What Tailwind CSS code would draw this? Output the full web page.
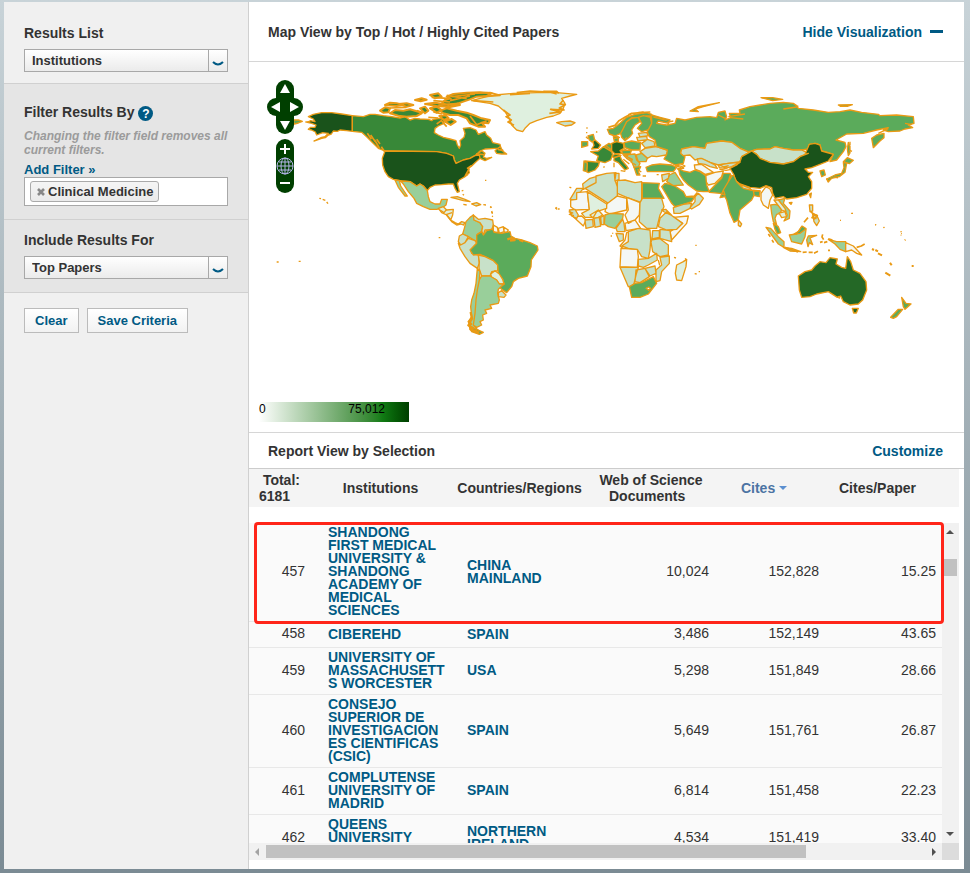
<!DOCTYPE html>
<html lang="en">
<head>
    <meta charset="utf-8">
    <meta name="viewport" content="width=device-width, initial-scale=1">
    <title>Map View by Top / Hot / Highly Cited Papers</title>
    <script src="https://cdn.jsdelivr.net/npm/@tailwindcss/browser@4"></script>
</head>
<body class="min-h-screen bg-linear-to-b from-[#c8d3d8] to-[#7b8b94] font-['Liberation_Sans',Arial,sans-serif] text-sm text-[#333]">

    <div class="flex pt-[2px] pr-[6px] pb-1 pl-1">

        <!-- Filters -->
        <aside class="w-[245px] shrink-0 border-r border-[#d0d0d0] bg-[#f0f0f0] font-bold">
            <div class="border-b border-[#d0d0d0] px-5 pt-[21px] pb-[11px]">
                <label for="results_list" class="block leading-5">Results List</label>
                <div class="relative mt-[6px] h-[23px] border border-[#a8a8a8] bg-linear-to-b from-white to-[#ebebeb]">
                    <select id="results_list" class="block h-full w-full appearance-none pt-[2px] pl-[7px] text-[13px] font-bold">
                        <option>Institutions</option>
                    </select>
                    <svg class="pointer-events-none absolute top-0 right-0 h-full w-[19px] border-l border-[#a8a8a8]" viewBox="0 0 18 21" fill="none" stroke="#005a84" stroke-width="2"><path d="M4 12q5 5 10 0"/></svg>
                </div>
            </div>

            <div class="border-b border-[#d0d0d0] bg-[#e5e5e5] px-5 pt-[18px] pb-[13px]">
                <div class="flex items-center gap-1 leading-5">
                    Filter Results By
                    <button type="button" aria-label="Help" class="mt-[3px] size-[15px] rounded-full bg-[#005a84] text-xs leading-none font-bold text-white">?</button>
                </div>
                <p class="mt-[7px] -mr-1 text-xs leading-[14px] text-[#9b9b9b] italic">Changing the filter field removes all current filters.</p>
                <a href="#" class="block pt-[5px] text-[13px] leading-[15px] text-[#005a84]">Add Filter »</a>
                <div class="flex h-[29px] items-center border border-[#a8a8a8] bg-white pl-[5px]">
                    <span class="flex h-[21px] items-center gap-[3px] rounded-[3px] border border-[#aaa] bg-linear-to-b from-[#f5f5f5] to-[#eaeaea] px-[5px] pt-px text-[13px]">
                        <button type="button" aria-label="Remove Clinical Medicine" class="ml-px">
                            <svg class="size-2" viewBox="0 0 8 8" stroke="#888" stroke-width="2.6"><path d="M1 1l6 6M7 1L1 7"/></svg>
                        </button>
                        Clinical Medicine
                    </span>
                </div>
            </div>

            <div class="border-b border-[#d0d0d0] bg-[#e5e5e5] px-5 pt-[10px] pb-[13px]">
                <label for="include_results" class="block leading-5">Include Results For</label>
                <div class="relative mt-[6px] h-[23px] border border-[#a8a8a8] bg-linear-to-b from-white to-[#ebebeb]">
                    <select id="include_results" class="block h-full w-full appearance-none pt-[2px] pl-[7px] text-[13px] font-bold">
                        <option>Top Papers</option>
                    </select>
                    <svg class="pointer-events-none absolute top-0 right-0 h-full w-[19px] border-l border-[#a8a8a8]" viewBox="0 0 18 21" fill="none" stroke="#005a84" stroke-width="2"><path d="M4 12q5 5 10 0"/></svg>
                </div>
            </div>

            <div class="flex gap-2 px-5 pt-[15px]">
                <button type="button" class="h-[25px] border border-[#bbb] bg-linear-to-b from-white to-[#f2f2f2] px-[10px] pt-[2px] text-[13px] font-bold text-[#005a84]">Clear</button>
                <button type="button" class="h-[25px] border border-[#bbb] bg-linear-to-b from-white to-[#f2f2f2] px-[10px] pt-[2px] text-[13px] font-bold text-[#005a84]">Save Criteria</button>
            </div>
        </aside>

        <main class="min-w-0 flex-1 bg-white pb-[9px]">
            <div class="flex h-[60px] items-center justify-between border-b border-[#d6d6d6] pr-[21px] pl-[19px] font-bold">
                <h2>Map View by Top / Hot / Highly Cited Papers</h2>
                <button type="button" class="flex items-center gap-2 font-bold text-[#005a84]">Hide Visualization <span class="h-[3px] w-[13px] bg-[#005a84]"></span></button>
            </div>

            <section class="relative border-b border-[#d6d6d6] pb-[10px]">
                <svg class="block w-full" viewBox="0 0 715 340" stroke="#ea9a14" stroke-linejoin="round" stroke-width="4" role="img" aria-label="World map">
                    <!-- Alaska and Hawaii -->
                    <g transform="translate(1 8) scale(.33333)">
                        <path fill="#1a531b" d="M175 140L190 133 215 128 245 128 275 132 307 137V184L290 182 270 180 262 184 250 183 244 192 235 195 226 203 215 205 192 213 215 202 225 200 235 190 218 188 200 195 196 186 185 180 175 178 182 172 195 172 198 165 185 160 172 157 182 152 195 155 190 147Z"/>
                        <path fill="#5bab5b" d="M130 150l15 0 12 4-12 5-12 3z"/>
                        <path fill="none" d="M166 156h12M208 385l5 1M218 388l8 3M230 396l4 5M80 576h6M146 574h6"/>
                    </g>
                    <!-- North America -->
                    <g transform="translate(121 18) scale(.33333)">
                        <path fill="#388838" d="M-53 107L-20 110 0 103 15 103 40 107 65 110 90 114 105 110 120 120 135 115 150 117 175 118 185 122 190 118 210 115 222 120 222 130 205 138 195 145 193 158 205 165 220 172 240 177 258 182 262 195 268 205 272 195 270 182 282 172 285 160 280 145 300 143 318 150 325 163 345 155 350 165 362 175 368 188 390 193 393 205 378 205 345 207 330 213 318 225 300 235 280 240 258 250 253 240 250 228 230 220 200 215 45 213 25 205 5 185 -10 170 -25 157 -53 154Z"/>
                        <path fill="#388838" d="M318 225L335 212 345 220 340 232 350 235 365 232 345 242 330 235ZM375 212L390 200 400 215 410 222 395 222 380 220Z"/>
                        <path fill="#388838" stroke-width="6" d="M60 100L75 90 100 92 120 88 145 95 155 100 140 108 110 110 85 107ZM30 92L45 82 60 85 55 97 40 98ZM210 92L230 85 260 92 290 98 310 105 335 115 360 120 355 130 335 128 345 140 325 140 300 130 290 115 265 105 240 105 220 100ZM45 75L60 68 80 70 100 75 80 78ZM85 72l25-2 20 5-20 5zM150 85l15-5 10 12-10 8zM180 85l20-5 15 10-15 8zM135 60l20-5 15 4-18 5zM180 45L205 40 215 50 195 55ZM215 70L225 60 240 55 230 50 250 42 290 38 330 37 365 40 350 48 320 50 300 58 280 65 260 72 235 75ZM165 72l30-4 30 5 45 2-30 6-40-3zM225 125l20-8 12 8-15 10zM208 108l18-2 10 8-14 6z"/>
                        <path fill="none" stroke-width="5" d="M-8 160l12 18M2 165l14 20M14 180l14 24M20 178l10 14M34 200l12 18M240 62l60-14M190 62l50 4M230 46l60 10M300 108l20 26 30-12M200 132l14-10 16 18M185 52l60 4M205 76l60-6M245 50l70-8M60 84l50-2M140 92l20 6M190 96l26 6M175 112l30 2M318 222l26 2M384 208l16 4"/>
                        <path fill="#1a531b" d="M45 213L200 215 230 220 250 228 253 240 258 250 280 240 300 235 315 227 328 225 330 235 315 248 305 258 295 265 298 278 285 290 268 300 262 310 268 335 262 337 255 325 250 312 235 312 215 314 195 315 180 322 172 332 160 318 150 312 140 318 120 305 95 303 70 298 55 290 45 275 38 255 37 235Z"/>
                        <path fill="#99cf9a" d="M92 303L120 305 140 318 150 312 160 318 172 332 175 350 180 365 195 372 210 372 215 358 232 358 228 375 215 385 200 388 180 388 160 380 140 370 132 355 115 335 100 312ZM75 300L88 302 92 318 112 348 105 348 85 322Z"/>
                        <path fill="#dff0df" d="M305 62L350 50 375 45 430 40 500 38 560 38 620 43 600 48 575 55 585 70 580 85 570 100 550 108 530 112 500 122 480 130 465 145 458 155 440 150 425 135 418 115 405 95 385 78 360 70Z"/>
                        <path fill="none" stroke-width="5" d="M400 90l20 15-12 5 16 10-10 6 18 10M580 60l-10 12 16 2-18 10 14 6-40-2 30 8-34 4M310 62l60 4M300 40l60-2 30 8-50 4M440 38l40-5 60 3 20 6M420 44l60-4M520 34l40 0 6 6M298 265l-12 22 8-4M305 256l-14 10"/>
                        <path fill="#c8e1c9" d="M560 128L575 125 600 123 615 128 605 135 585 138ZM243 352L262 350 285 358 300 365 280 362 258 356ZM305 372L320 368 332 374 318 378Z"/>
                        <path fill="none" d="M280 373l10 2M340 374l8 1M275 333l5-2M278 343l4 3M362 380l2 4M365 393l2 8M345 301h4M557 382l4 3M564 387h5M600 323h4M649 144h4"/>
                    </g>
                    <!-- South America -->
                    <g transform="translate(181 138) scale(.33333)" fill="#c8e1c9">
                        <path fill="#dff0df" d="M25 25L40 20 50 30 70 28 68 45 62 60 50 45 35 38Z"/>
                        <path d="M50 45L62 60 75 68 85 72 95 65 105 68 100 75 92 72 80 75 65 65Z"/>
                        <path fill="none" d="M30 30l12 8 8-10M48 44l18-6"/>
                        <path fill="#99cf9a" d="M108 65L120 52 130 45 132 60 150 68 158 80 155 95 142 103 140 125 132 120 115 110 98 102 103 85Z"/>
                        <path d="M130 45L145 58 165 55 188 60 190 75 185 90 165 90 160 105 155 95 158 80 150 68 132 60Z"/>
                        <path fill="#f4f7f4" d="M190 75L202 82 205 98 190 95ZM205 85L220 80 222 95 208 100ZM222 82L235 90 230 98 222 95Z"/>
                        <path d="M88 108L98 102 115 110 105 128 92 135 85 125ZM85 130L92 135 105 128 115 115 135 122 140 130 122 150 125 160 145 165 148 190 142 205 120 190 105 170 90 145Z"/>
                        <path fill="#5bab5b" d="M140 105L155 95 160 105 170 92 188 87 192 97 215 100 240 95 243 108 255 115 275 120 300 128 322 138 324 150 312 168 304 180 303 200 292 228 265 235 250 245 245 260 230 278 215 268 208 262 222 252 218 238 205 222 202 195 190 182 165 170 150 163 130 165 120 150 140 130Z"/>
                        <path d="M145 165L165 170 190 182 203 195 203 212 185 215 180 228 155 228 147 205 148 185Z"/>
                        <path fill="#dff0df" d="M182 222L195 212 208 222 218 238 222 252 208 252 200 240 185 232Z"/>
                        <path fill="#99cf9a" d="M155 228L180 228 200 240 208 252 222 252 205 268 203 280 208 300 205 310 180 315 185 325 165 330 170 340 158 345 160 360 150 365 155 375 140 382 130 375 135 340 138 300 142 270 148 240ZM142 205L150 215 148 240 142 270 138 300 135 340 130 375 145 392 120 385 115 365 125 350 122 320 125 300 132 280 138 250Z"/>
                        <path d="M205 278L215 272 228 285 222 292 205 290Z"/>
                        <path fill="#5bab5b" d="M118 380L140 388 160 397 148 403 125 395Z"/>
                        <path fill="none" stroke-width="7" d="M232 118l12-4 10 6-14 2M115 362l8 10-8 4 14 8-8 4 20 6M268 120l12 4M122 336l4 20-6 10M128 392l20 6"/>
                        <path fill="none" d="M26 113h5M180 20l4 2M185 36l3 4M186 48l3 2M376 24l6 4"/>
                    </g>
                    <!-- Europe -->
                    <g transform="translate(311 18) scale(.33333)" fill="#5bab5b">
                        <path d="M142 148L160 145 180 130 200 112 225 103 260 98 275 103 272 112 250 107 235 112 215 115 200 125 190 145 182 160 165 168 148 162ZM190 145L200 125 215 113 235 112 240 125 225 135 215 150 218 160 208 172 195 182 185 172 182 160ZM235 112L250 107 270 108 275 130 270 148 245 155 232 145 245 130Z"/>
                        <path fill="none" stroke-width="5" d="M145 142l20-6 12-14 20-12 20-10 24-2 30-2M205 104l10-4M235 98l16-2"/>
                        <path fill="#c8e1c9" d="M235 160l25-3 5 10-25 4zM230 172l30-3 2 10-28 4zM245 190L262 178 282 185 285 198 255 203ZM240 215L255 205 290 200 325 212 318 225 290 230 275 228 262 235 248 222Z"/>
                        <path d="M192 188L215 183 242 188 240 210 215 210 195 203ZM185 212L215 210 210 222 188 222ZM132 200l15-10 12 5-5 15-10 0zM65 185l18 0 0 12-18 5zM160 170l15 0 0 14-12 0z"/>
                        <path fill="#226522" d="M155 190L170 185 190 190 192 205 180 212 185 220 165 222 155 212Z"/>
                        <path fill="#388838" d="M92 215L115 213 130 200 155 215 158 225 152 240 135 248 110 242 115 228ZM75 243L118 247 115 258 105 270 85 278 80 275 82 250ZM162 232L180 228 185 240 200 258 205 265 195 270 175 248 162 242ZM155 228l12-6 16 4-20 8z"/>
                        <path d="M72 243L82 250 80 275 70 272Z"/>
                        <path fill="#226522" d="M98 184L105 180 122 195 115 205 95 207 102 196Z"/>
                        <path d="M84 168L100 163 104 180 96 186 88 180Z"/>
                        <path fill="#99cf9a" d="M190 225L225 222 230 240 240 250 235 262 222 262 215 245 200 235ZM228 225L245 220 262 235 258 245 235 245Z"/>
                        <path d="M222 262L242 260 235 275 240 285 230 285ZM258 262L275 255 300 252 335 255 350 262 340 275 300 275 262 275Z"/>
                        <path fill="none" d="M205 232l12 6-4 10M190 238l18 14M220 250l8 6M162 248v14M182 272l14 2M248 288h10M290 284h6M78 158h4M108 155l4 2M84 176l-6-6M130 262l4-2M340 245l20 5 15 8-10 6-15-6M345 262l12-4M195 178l5-6M196 226l20 14M204 222l-4 14M136 196l16 12M190 206l12 6M232 268l12 8M162 176l18-4"/>
                    </g>
                    <!-- Africa -->
                    <g transform="translate(311 98) scale(.33333)" fill="#c8e1c9">
                        <path d="M68 72L90 55 108 50 108 68 90 78 70 88ZM30 118L50 85 70 85 58 100 48 120ZM75 85L108 68 108 48 140 40 168 38 165 60 172 80 172 108 145 130 80 88ZM163 40l14 0 0 18-12 5zM172 62L195 60 225 68 245 65 245 128 200 112 172 100Z"/>
                        <path fill="#5bab5b" d="M247 68L298 70 295 85 312 115 247 115Z"/>
                        <path fill="#f4f7f4" d="M32 120L50 118 50 98 82 95 88 148 45 150 32 140ZM140 132L172 108 200 115 200 150 150 162 135 155ZM200 112L240 128 238 165 225 180 205 190 195 165 205 150ZM40 170L65 168 78 180 70 198ZM195 190L225 180 242 205 220 208 198 212ZM180 258L195 240 200 218 212 215 205 250 185 262ZM340 172L385 168 380 190 335 240 330 215 368 190ZM183 265L232 268 235 290 232 322 180 320Z"/>
                        <path fill="#dff0df" d="M82 95L140 132 140 145 110 155 100 172 75 172 65 160 88 148ZM90 165L115 150 128 165 115 172 100 175ZM350 315L370 305 380 298 378 320 365 362 350 360 346 340Z"/>
                        <path d="M247 115L305 115 312 140 300 165 290 205 260 205 238 185 240 128ZM28 150L45 148 55 165 50 175 35 168ZM75 180L98 178 100 200 78 205ZM102 175L118 172 122 198 105 202ZM122 172l10-6 0 28-8 0zM168 205L188 178 192 190 195 215 172 215ZM168 220L190 222 190 240 178 245Z"/>
                        <path fill="#99cf9a" d="M135 165L150 160 190 162 188 175 165 205 145 200 133 192Z"/>
                        <path d="M205 215L235 205 270 210 272 240 270 270 265 295 245 290 232 268 205 265 185 258 205 245ZM305 150l12-2 18 18-22-10zM300 175L320 155 340 170 368 190 350 208 320 210 295 200ZM300 208L330 212 335 245 300 235ZM278 212l20 0 0 20-22 5zM272 240L300 236 325 255 325 285 300 290 278 275ZM235 298L265 295 290 280 292 300 265 315 250 322 235 318ZM300 292L328 288 328 310 305 335 300 362 288 365 288 330 305 315ZM255 325L285 318 288 340 270 348ZM180 322L235 322 228 345 220 380 205 380ZM228 330L255 325 268 350 240 368 225 365Z"/>
                        <path fill="#5bab5b" d="M208 380L225 370 245 368 280 350 290 370 265 402 240 412 215 412Z"/>
                        <path fill="#fff" d="M258 385l8-4 6 4-6 6z"/>
                        <path fill="none" d="M26 155l12 4-10 4 14 4M295 300l4 16M272 232l2 14M28 82h4M342 292l6 2M376 295l2 6M152 228h4M158 218v3M406 256h4M404 341l6 1M416 335h4"/>
                    </g>
                    <!-- Asia -->
                    <g transform="translate(411 23) scale(.33333)" fill="#5bab5b">
                        <path d="M-25 90L0 97 30 105 25 115 -5 108 -10 115 20 120 45 115 50 100 75 105 110 97 150 95 170 98 175 82 195 78 200 95 195 105 212 98 208 85 240 85 238 75 270 65 300 60 330 55 370 52 400 55 410 62 415 70 460 75 505 82 540 80 570 75 605 82 655 88 660 92 710 90 760 95 762 115 745 120 758 128 735 132 720 138 685 140 670 135 685 128 650 135 610 145 560 147 528 165 555 172 558 185 550 200 530 225 510 230 520 208 505 203 485 198 480 180 465 175 448 178 445 192 425 195 400 195 370 190 345 185 330 192 290 193 275 198 265 200 240 190 215 172 185 168 140 175 135 190 100 185 65 192 62 205 75 215 70 235 45 240 12 222 20 208 22 195 -10 185 -15 165 -32 155 -38 140 -25 115Z"/>
                        <path d="M635 160L650 150 672 145 672 158 660 168 640 188ZM565 172l5 12 0 20-5 8-3-20zM535 60l42-1-15 5-20 0zM90 78L115 65 178 53 130 65 105 72 115 80ZM303 38l35 0 30 5-30 4z"/>
                        <path fill="none" d="M370 72l40-6 5-4M212 98l38 4M205 95l50-8M175 90l20 10M735 115l20 4M655 145l30-14M568 195l8 4M570 180v-10M-20 96l40 10M20 112l20-4"/>
                        <path fill="#c8e1c9" d="M65 192L100 185 135 190 140 175 185 168 215 172 240 190 268 202 245 215 240 230 205 235 175 240 150 232 120 220 105 225 90 210 70 212 62 205ZM275 198L290 193 330 192 345 185 370 190 400 195 425 195 445 205 420 215 400 230 370 237 330 232 300 220 290 208Z"/>
                        <path fill="#1a531b" d="M210 250L230 240 240 230 245 215 268 202 275 198 290 208 300 220 330 232 370 237 400 230 420 215 445 205 435 208 448 178 465 175 480 180 485 198 520 208 505 228 480 238 455 248 435 252 445 262 458 262 445 275 455 290 455 310 440 328 410 338 380 342 370 335 345 340 338 325 335 308 318 302 300 310 270 307 240 297 225 285 222 270ZM388 353l8-1-3 6z"/>
                        <path fill="#c8e1c9" d="M112 222L125 220 150 232 165 240 172 250 150 245 135 238 115 235ZM175 240L205 235 240 232 215 245 195 250 178 248Z"/>
                        <path fill="#f4f7f4" d="M103 240L125 238 145 252 160 262 135 268 120 258 105 252ZM137 272L165 262 190 258 185 275 165 295 145 300 137 288Z"/>
                        <path fill="none" d="M176 238l16 8 14-4M178 252l20 4 12-2M190 246l12 4M45 240l20 4 6 6-20 2"/>
                        <path d="M55 250L70 258 90 262 105 255 120 260 137 272 140 300 148 320 130 320 110 318 85 300 70 285 60 270ZM148 318L165 300 185 280 190 265 210 265 215 275 205 290 190 315 195 330 180 325 148 322ZM180 338L190 315 205 290 210 272 222 272 230 290 245 305 275 315 300 318 298 325 285 325 275 345 240 375 235 405 222 412 210 385 200 345 195 335Z"/>
                        <path fill="#c8e1c9" d="M240 298L270 310 275 316 250 310ZM235 405l10 12-4 8-6-4z"/>
                        <path d="M280 318L300 318 298 335 283 332ZM5 305L15 295 40 300 70 320 78 335 105 335 95 350 70 358 45 365 35 355 20 330Z"/>
                        <path fill="#99cf9a" d="M28 270L45 262 60 285 70 300 40 302 20 290Z"/>
                        <path fill="#c8e1c9" d="M5 270L28 265 25 280 8 290ZM40 368L70 358 95 355 90 370 60 385 42 385ZM105 335L115 325 130 340 118 358 95 372 90 368 105 350ZM78 335l25-2 8-10-6 14z"/>
                        <path fill="#f4f7f4" d="M303 325L318 305 330 312 338 330 330 345 325 370 310 360 303 345Z"/>
                        <path fill="#99cf9a" d="M332 360L345 358 370 365 360 385 350 388 345 400 350 420 340 410 335 385ZM355 345L375 340 370 355 390 378 388 400 372 408 382 390 365 358Z"/>
                        <path fill="#dff0df" d="M342 345L355 345 375 370 378 380 365 375ZM357 384L375 380 380 395 365 398Z"/>
                    </g>
                    <!-- Japan, Korea, Philippines -->
                    <g transform="translate(531 23) scale(.33333)" fill="#5bab5b">
                        <path d="M140 282L165 270 185 265 192 248 190 232 200 235 195 262 178 275 155 280 145 290ZM190 230l12-12 18 8-12 10zM120 258L132 255 136 270 125 275ZM88 328l6-4-2 14z"/>
                        <path fill="#c8e1c9" d="M88 360l10 0 0 18-8 2zM98 385l12 5 8 18-8 14-8-12z"/>
                        <path fill="none" stroke-width="5" d="M92 380l12 10-8 8 14 2M96 388l16 4-12 12M84 398l-12 14M140 280l6 12M162 276l12 2"/>
                        <path fill="none" stroke-width="3" d="M213 385h6M180 406h3M285 420h3M310 428h3M362 440h3M363 446h3"/>
                    </g>
                    <!-- Oceania -->
                    <g transform="translate(501 128) scale(.33333)" fill="#99cf9a">
                        <path fill="#246826" d="M145 258L165 245 185 240 195 228 210 215 228 218 240 203 262 207 258 222 275 232 287 235 292 200 302 215 310 240 330 250 348 275 350 300 338 330 325 342 300 345 280 335 272 318 262 322 235 305 200 312 180 320 155 322 148 300ZM307 355l18 0-6 14-8 0z"/>
                        <path fill="#5bab5b" d="M455 322L468 340 483 342 465 358 460 350ZM422 382L445 358 458 358 440 380 430 385ZM70 100L85 110 92 128 82 132 75 118Z"/>
                        <path d="M48 112L62 115 85 140 102 155 102 172 85 162 65 135ZM100 172L125 175 152 185 120 183ZM118 135L140 132 155 110 168 118 165 140 155 162 125 155ZM170 150l5-12 25-2-20 8 8 20-10-6-4 12zM235 148L260 155 287 155 287 185 270 178 255 162Z"/>
                        <path fill="#5bab5b" d="M132 132L146 124 156 108 168 116 158 124 150 130Z"/>
                        <path fill="#f4f7f4" d="M287 158L310 168 335 195 320 190 305 180 287 185Z"/>
                        <path fill="none" stroke-width="5" d="M158 187l12-1M176 187h12M192 190l12-6M210 157l8-2M222 158l10-3M218 133l-2 8 5 8M235 146l12 4M320 172l14-4 10-6M234 181h6M55 132l6 8M66 150l5 8M104 172l40 14M265 318l4 8"/>
                        <path fill="none" stroke-width="6" d="M366 177l6 3M376 180l8 4M384 190l12 6M420 218l5 8M406 248l15 9M485 228h6"/>
                        <path fill="none" stroke-width="3" d="M305 70h4M270 91h3M375 104h4M400 112h4M453 124v3M453 134v3M463 149l5 2"/>
                    </g>
                </svg>

                <!-- Pan and zoom controls lie over the map -->
                <div class="absolute top-[18px] left-[18px] flex flex-col items-center gap-[5px]">
                    <div class="grid grid-cols-[repeat(4,9px)] grid-rows-[repeat(3,18px)]">
                        <button type="button" aria-label="Pan up" class="col-span-2 col-start-2 rounded-t-full bg-[#003f00]"><svg viewBox="0 0 18 18" fill="#fff"><path d="M9 4l5 9H4z"/></svg></button>
                        <button type="button" aria-label="Pan left" class="col-span-2 col-start-1 row-start-2 rounded-l-full bg-[#003f00]"><svg viewBox="0 0 18 18" fill="#fff"><path d="M4 9l9-5v10z"/></svg></button>
                        <button type="button" aria-label="Pan right" class="col-span-2 col-start-3 row-start-2 rounded-r-full bg-[#003f00]"><svg viewBox="0 0 18 18" fill="#fff"><path d="M14 9L5 4v10z"/></svg></button>
                        <button type="button" aria-label="Pan down" class="col-span-2 col-start-2 row-start-3 rounded-b-full bg-[#003f00]"><svg viewBox="0 0 18 18" fill="#fff"><path d="M9 14L4 5h10z"/></svg></button>
                    </div>
                    <div class="grid w-[18px] grid-rows-[repeat(3,18px)] overflow-hidden rounded-full bg-[#003f00]">
                        <button type="button" aria-label="Zoom in"><svg viewBox="0 0 18 18" stroke="#fff" stroke-width="2"><path d="M4 10h10M9 5v10"/></svg></button>
                        <button type="button" aria-label="Zoom to world"><svg viewBox="0 0 18 18" fill="none" stroke="#b4b4e8"><circle cx="9" cy="9" r="8"/><ellipse cx="9" cy="9" rx="4" ry="8"/><path d="M9 1v16M1 9h16M3 5h12M3 13h12"/></svg></button>
                        <button type="button" aria-label="Zoom out"><svg viewBox="0 0 18 18" stroke="#fff" stroke-width="2"><path d="M4 8h10"/></svg></button>
                    </div>
                </div>

                <div class="ml-[10px] flex h-5 w-[150px] justify-between bg-linear-to-r from-white via-[#117c14] via-82% to-[#003f00] pr-6 text-xs leading-[14px] text-black">
                    <span>0</span>
                    <span>75,012</span>
                </div>
            </section>

            <div class="flex h-9 items-center justify-between border-b border-[#ccc] pr-[21px] pl-[19px] font-bold">
                <h2>Report View by Selection</h2>
                <a href="#" class="text-[#005a84]">Customize</a>
            </div>

            <div class="mr-[5px] bg-[#f4f4f4] pr-[17px]">
                <table class="h-[38px] w-full table-fixed leading-4">
                    <thead>
                        <tr>
                            <th class="w-[68px] pl-[10px] text-left">&nbsp;Total:<br>6181</th>
                            <th class="w-[139px] pr-3">Institutions</th>
                            <th class="w-[139px] pr-3">Countries/Regions</th>
                            <th class="w-[124px] pr-3">Web of Science Documents&nbsp;&nbsp;</th>
                            <th class="w-[110px] pr-5"><button type="button" class="font-bold text-[#4c73a3]">Cites <svg class="mb-[3px] inline h-1 w-2" viewBox="0 0 8 4" fill="#5b8fd0"><path d="M0 0h8L4 4z"/></svg></button></th>
                            <th class="pr-4">Cites/Paper</th>
                        </tr>
                    </thead>
                </table>
            </div>

            <div class="relative mt-4 mr-[5px] grid grid-cols-[minmax(0,1fr)_17px] grid-rows-[320px_17px]">
                <div class="overflow-hidden bg-[#fafafa]">
                    <table class="w-full table-fixed border-separate border-spacing-0 text-right leading-[18px]">
                        <colgroup>
                            <col class="w-[68px]">
                            <col class="w-[139px]">
                            <col class="w-[139px]">
                            <col class="w-[124px]">
                            <col class="w-[110px]">
                            <col>
                        </colgroup>
                        <tbody id="rows"></tbody>
                    </table>
                </div>

                <!-- Vertical scroll bar -->
                <div class="flex flex-col items-center bg-[#f1f1f1]">
                    <svg class="size-[17px]" viewBox="0 0 17 17" fill="#505050"><path d="M8 7l4 4H4z"/></svg>
                    <div class="mt-[19px] h-[17px] w-[13px] bg-[#c1c1c1]"></div>
                    <svg class="mt-auto size-[17px]" viewBox="0 0 17 17" fill="#505050"><path d="M8 10L4 6h8z"/></svg>
                </div>

                <!-- Horizontal scroll bar -->
                <div class="flex items-center bg-[#f1f1f1]">
                    <svg class="size-[17px]" viewBox="0 0 17 17" fill="#a3a3a3"><path d="M6 9l4-4v8z"/></svg>
                    <div class="flex-1"><div class="h-[13px] w-[82%] bg-[#c1c1c1]"></div></div>
                    <svg class="size-[17px]" viewBox="0 0 17 17" fill="#505050"><path d="M11 9L7 5v8z"/></svg>
                </div>
                <div class="bg-[#dcdcdc]"></div>

                <!-- Highlight round the first row -->
                <div class="pointer-events-none absolute -top-px right-[15px] left-[5px] h-[102px] rounded-[4px] border-3 border-[#ff2519]"></div>
            </div>
        </main>
    </div>

    <script>
        const rows = [
            [457, 'SHANDONG FIRST MEDICAL UNIVERSITY & SHANDONG ACADEMY OF MEDICAL SCIENCES', 'CHINA MAINLAND', '10,024', '152,828', '15.25'],
            [458, 'CIBEREHD', 'SPAIN', '3,486', '152,149', '43.65'],
            [459, 'UNIVERSITY OF MASSACHUSETTS WORCESTER', 'USA', '5,298', '151,849', '28.66'],
            [460, 'CONSEJO SUPERIOR DE INVESTIGACIONES CIENTIFICAS (CSIC)', 'SPAIN', '5,649', '151,761', '26.87'],
            [461, 'COMPLUTENSE UNIVERSITY OF MADRID', 'SPAIN', '6,814', '151,458', '22.23'],
            [462, 'QUEENS UNIVERSITY BELFAST', 'NORTHERN IRELAND', '4,534', '151,419', '33.40'],
        ];

        let output = '';
        rows.forEach(([rank, name, country, docs, cites, perPaper]) => {
            output += `<tr>
                <td class="border-b border-[#e8e8e8] pt-[2px] pr-3 pb-[5px]">${rank}</td>
                <td class="border-b border-[#e8e8e8] pt-[3px] pr-[10px] pb-1 pl-[11px] text-left leading-[13px] font-bold wrap-break-word text-[#005a84]"><a href="#">${name.replace('&', '&amp;')}</a></td>
                <td class="border-b border-[#e8e8e8] pt-[3px] pr-[10px] pb-1 pl-[11px] text-left leading-[13px] font-bold text-[#005a84]"><a href="#">${country}</a></td>
                <td class="border-b border-[#e8e8e8] pt-[2px] pr-[10px] pb-[5px]">${docs}</td>
                <td class="border-b border-[#e8e8e8] pt-[2px] pr-[10px] pb-[5px]">${cites}</td>
                <td class="border-b border-[#e8e8e8] pt-[2px] pr-[6px] pb-[5px]">${perPaper}</td>
            </tr>`;
        });
        document.getElementById('rows').innerHTML = output;
    </script>

</body>
</html>
